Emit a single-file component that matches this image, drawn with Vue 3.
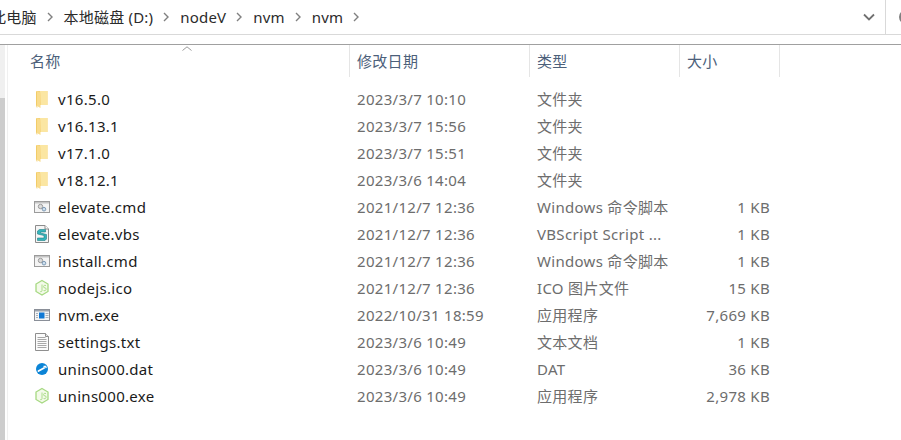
<template>
  <div class="explorer">
    <div class="address-row">
      <div class="crumbs">
        <template v-for="(c, i) in crumbs" :key="i">
          <span class="crumb">{{ c }}</span>
          <svg class="sep" width="7" height="10" viewBox="0 0 7 10">
            <path d="M1 1l4 4-4 4" fill="none" stroke="#808080" stroke-width="1.4" />
          </svg>
        </template>
      </div>
      <div class="drop">
        <svg width="12" height="8" viewBox="0 0 12 8">
          <path d="M1 1.500l5 5 5-5" fill="none" stroke="#707070" stroke-width="1.800" />
        </svg>
      </div>
      <div class="refresh"><span></span></div>
    </div>
    <div class="gap"></div>
    <div class="body">
      <div class="scroll"><div class="thumb"></div></div>
      <div class="list">
        <div class="head">
          <div class="hcell">
            名称
            <svg class="caret" width="10" height="5" viewBox="0 0 10 5">
              <path d="M.5 4.500L5 .8l4.500 3.700" fill="none" stroke="#9a9a9a" />
            </svg>
          </div>
          <div class="hcell">修改日期</div>
          <div class="hcell">类型</div>
          <div class="hcell">大小</div>
        </div>
        <div class="rows">
          <div v-for="f in files" :key="f.name" class="row">
            <div class="name">
              <svg class="icon" width="16" height="18" viewBox="0 0 16 18">
                <template v-if="f.icon === 'folder'">
                  <path d="M2 1h11.500v14H2z" fill="#f4d27a" />
                  <path d="M6 1h7.500v14H7z" fill="#fbe6a2" />
                  <path d="M2 1l4.500 1.500V18L2 15.500z" fill="#f9dc8c" />
                  <path d="M2.500 2v13.500L3 17.500" stroke="#f0c860" fill="none" stroke-width=".8" />
                </template>
                <template v-else-if="f.icon === 'cmd'">
                  <rect x=".5" y="3.500" width="15" height="11" fill="#f4f4f4" stroke="#9b9b9b" />
                  <path d="M1 4h14v1.500H1z" fill="#c4c4c4" />
                  <circle cx="6.500" cy="8.500" r="2.200" fill="#dcdcdc" stroke="#9a9a9a" />
                  <circle cx="10" cy="11.200" r="1.800" fill="#cfe0ee" stroke="#7d9ab5" />
                </template>
                <template v-else-if="f.icon === 'vbs'">
                  <path d="M1.500 .5h9.500l3.500 3.500v13.500h-13z" fill="#f5f5f5" stroke="#8c8c8c" />
                  <path d="M11 .5V4h3.500" fill="#fff" stroke="#8c8c8c" />
                  <path d="M11.500 4.500H5.500L3.500 6v3L10 10.500V13H3.500v2.500h7.500l1.500-1.500V9.500L6.500 8V7h5z" fill="#35b4ba" stroke="#1f7f86" stroke-width=".6" />
                </template>
                <template v-else-if="f.icon === 'node'">
                  <path d="M8 1.500l6 3.500v7.500L8 16l-6-3.500V5z" fill="#f3fae9" stroke="#a6d982" stroke-width="1.300" />
                  <path d="M8 5.500v6q0 1.500-1.800 1.200M12 6.500q-2.200-.8-2.400.8t1.400 1.600 1 1.800-2.400.8" fill="none" stroke="#a6d982" stroke-width=".9" />
                </template>
                <template v-else-if="f.icon === 'exe'">
                  <rect x=".5" y="3.500" width="15" height="11" fill="#f4f4f4" stroke="#8a8f98" />
                  <path d="M1 4h14v1.500H1z" fill="#9ba3ad" />
                  <rect x="5" y="6.500" width="5.500" height="6" fill="#0f78d4" />
                  <path d="M2 7.500h2M2 9.500h2M2 11.500h2M11.500 7.500h3M11.500 9.500h3M11.500 11.500h3" stroke="#a8b2bc" />
                </template>
                <template v-else-if="f.icon === 'txt'">
                  <path d="M1.500 .5h10l3 3v14h-13z" fill="#fbfbfb" stroke="#8f8f8f" />
                  <path d="M3.500 4.500h8M3.500 6.500h9M3.500 8.500h9M3.500 10.500h9M3.500 12.500h9M3.500 14.500h9" stroke="#a8a8a8" />
                  <path d="M11.500 .5v3h3" fill="#e6e6e6" stroke="#8f8f8f" />
                </template>
                <template v-else>
                  <circle cx="8" cy="9" r="6" fill="#0b84d6" />
                  <path d="M4.500 11L10 8" stroke="#fff" stroke-width="1.800" stroke-linecap="round" />
                  <path d="M9.500 6.500l2.200 0 .5 1.600" fill="none" stroke="#fff" stroke-width="1.300" />
                </template>
              </svg>
              <span class="fname">{{ f.name }}</span>
            </div>
            <div class="cell">{{ f.date }}</div>
            <div class="cell">{{ f.type }}</div>
            <div class="cell size">{{ f.size }}</div>
          </div>
        </div>
      </div>
    </div>
  </div>
</template>

<script setup>
const crumbs = ['此电脑', '本地磁盘 (D:)', 'nodeV', 'nvm', 'nvm']

const files = [
  { name: 'v16.5.0', date: '2023/3/7 10:10', type: '文件夹', size: '', icon: 'folder' },
  { name: 'v16.13.1', date: '2023/3/7 15:56', type: '文件夹', size: '', icon: 'folder' },
  { name: 'v17.1.0', date: '2023/3/7 15:51', type: '文件夹', size: '', icon: 'folder' },
  { name: 'v18.12.1', date: '2023/3/6 14:04', type: '文件夹', size: '', icon: 'folder' },
  { name: 'elevate.cmd', date: '2021/12/7 12:36', type: 'Windows 命令脚本', size: '1 KB', icon: 'cmd' },
  { name: 'elevate.vbs', date: '2021/12/7 12:36', type: 'VBScript Script ...', size: '1 KB', icon: 'vbs' },
  { name: 'install.cmd', date: '2021/12/7 12:36', type: 'Windows 命令脚本', size: '1 KB', icon: 'cmd' },
  { name: 'nodejs.ico', date: '2021/12/7 12:36', type: 'ICO 图片文件', size: '15 KB', icon: 'node' },
  { name: 'nvm.exe', date: '2022/10/31 18:59', type: '应用程序', size: '7,669 KB', icon: 'exe' },
  { name: 'settings.txt', date: '2023/3/6 10:49', type: '文本文档', size: '1 KB', icon: 'txt' },
  { name: 'unins000.dat', date: '2023/3/6 10:49', type: 'DAT', size: '36 KB', icon: 'dat' },
  { name: 'unins000.exe', date: '2023/3/6 10:49', type: '应用程序', size: '2,978 KB', icon: 'node' }
]
</script>

<style>
html,
body {
  background: #fff;
}
</style>

<style scoped>
.explorer {
  width: 901px;
  height: 440px;
  overflow: hidden;
  background: #fff;
  color: #1a1a1a;
  font-family: 'Noto Sans', 'Noto Sans CJK SC', sans-serif;
  font-size: 15px;
  letter-spacing: 0.3px;
  line-height: 20px;
}

.address-row {
  display: flex;
  height: 34px;
  border-bottom: 1px solid #d9d9d9;
}

.crumbs {
  flex: 1;
  display: flex;
  align-items: center;
  margin-left: -9px;
  white-space: nowrap;
  overflow: hidden;
  color: #2b2b2b;
  letter-spacing: 0.2px;
  padding-bottom: 1px;
  box-sizing: border-box;
}

.crumb {
  flex: none;
}

.sep {
  flex: none;
  margin: 0 10px;
}

.drop {
  flex: none;
  width: 33px;
  display: flex;
  align-items: center;
  justify-content: center;
  border-right: 1px solid #d9d9d9;
}

.refresh {
  flex: none;
  width: 15px;
  overflow: hidden;
  display: flex;
  align-items: center;
  padding-left: 13px;
  box-sizing: border-box;
}

.refresh span {
  flex: none;
  width: 10px;
  height: 10px;
  border: 2px solid #808080;
  border-radius: 50%;
}

.gap {
  height: 9px;
}

.body {
  display: flex;
  height: 396px;
  border-top: 1px solid #a0a0a0;
}

.scroll {
  flex: none;
  width: 5px;
  background: #f0f0f0;
  padding-top: 53px;
}

.thumb {
  height: 100%;
  background: #cdcdcd;
}

.list {
  flex: 1;
  margin-left: 2px;
  padding-left: 15px;
  border-left: 1px solid #f0f0f0;
}

.head {
  display: grid;
  grid-template-columns: 327px 180px 150px 100px;
  height: 32px;
}

.hcell {
  position: relative;
  display: flex;
  align-items: center;
  padding-left: 7px;
  border-right: 1px solid #e5e5e5;
  color: #4c607a;
}

.caret {
  position: absolute;
  left: 159px;
  top: 1px;
}

.rows {
  padding-top: 9px;
}

.row {
  display: grid;
  grid-template-columns: 327px 180px 150px 90px;
  height: 27px;
  align-items: center;
}

.name {
  display: flex;
  align-items: center;
  gap: 8px;
  padding-left: 11px;
  padding-bottom: 2px;
}

.icon {
  flex: none;
}

.cell {
  padding-left: 7px;
  padding-bottom: 1px;
  color: #6d6d6d;
  white-space: nowrap;
}

.size {
  padding-left: 0;
  text-align: right;
}
</style>
